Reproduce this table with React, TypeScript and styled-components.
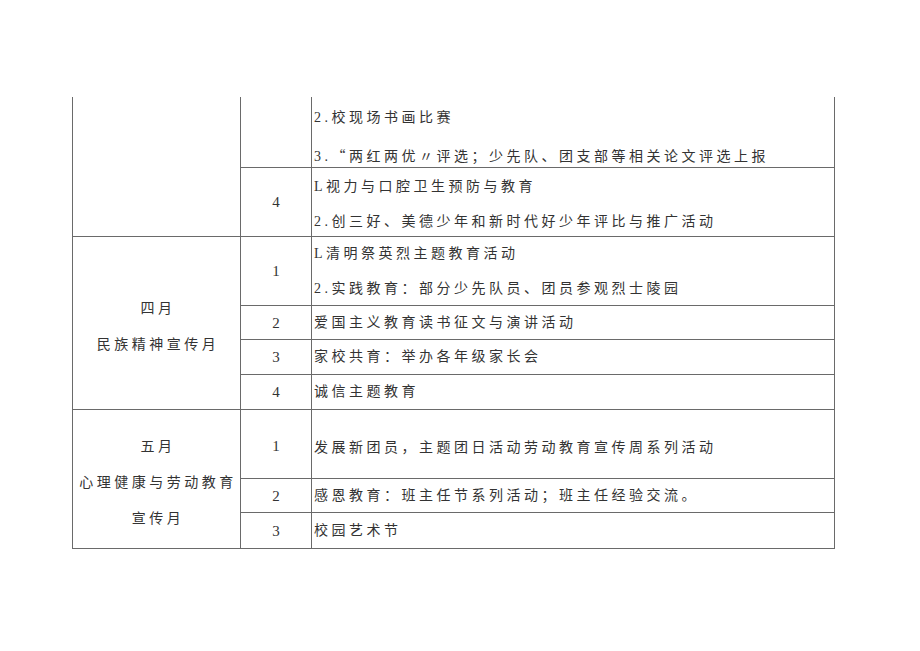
import styled, { createGlobalStyle } from "styled-components";

type Row = {
  height: number;
  month?: { lines: string[]; span: number };
  monthBlank?: number;
  num?: string;
  items: string[];
  gap?: number;
  padTop?: number;
  top?: boolean;
  noTop?: boolean;
};

const rows: Row[] = [
  {
    height: 70,
    monthBlank: 2,
    num: "",
    items: ["2.校现场书画比赛", "3.“两红两优〃评选；少先队、团支部等相关论文评选上报"],
    gap: 17,
    padTop: 11,
    top: true,
    noTop: true,
  },
  {
    height: 69,
    num: "4",
    padTop: 4,
    items: ["L视力与口腔卫生预防与教育", "2.创三好、美德少年和新时代好少年评比与推广活动"],
  },
  {
    height: 69,
    month: { lines: ["四月", "民族精神宣传月"], span: 4 },
    num: "1",
    items: ["L清明祭英烈主题教育活动", "2.实践教育：部分少先队员、团员参观烈士陵园"],
  },
  { height: 34, num: "2", items: ["爱国主义教育读书征文与演讲活动"] },
  { height: 35, num: "3", items: ["家校共育：举办各年级家长会"] },
  { height: 35, num: "4", items: ["诚信主题教育"] },
  {
    height: 69,
    month: { lines: ["五月", "心理健康与劳动教育", "宣传月"], span: 3 },
    num: "1",
    padTop: 8,
    items: ["发展新团员，主题团日活动劳动教育宣传周系列活动"],
  },
  { height: 34, num: "2", items: ["感恩教育：班主任节系列活动；班主任经验交流。"] },
  { height: 36, num: "3", items: ["校园艺术节"] },
];

const Global = createGlobalStyle`
  html, body {
    margin: 0;
    padding: 0;
    background: #fff;
  }
  body {
    font-family: "Liberation Serif", "Noto Sans CJK SC", serif;
    color: #333;
  }
`;

const Page = styled.div`
  width: 920px;
  height: 651px;
  padding: 97px 0 0 72px;
  box-sizing: border-box;
`;

const Table = styled.table`
  border-collapse: collapse;
  table-layout: fixed;
  width: 762px;
`;

const Cell = styled.td<{ $noTop?: boolean; $align?: string; $valign?: string }>`
  border: 1px solid #6a6a6a;
  border-top: ${(p) => (p.$noTop ? "none" : "1px solid #6a6a6a")};
  padding: 0;
  text-align: ${(p) => p.$align || "left"};
  vertical-align: ${(p) => p.$valign || "middle"};
  font-size: 14px;
  letter-spacing: 3.5px;
  line-height: 20px;
`;

const MonthList = styled.div`
  display: flex;
  flex-direction: column;
  align-items: center;
  gap: 16px;
  padding: 7px 0 0 3px;
`;

const Num = styled.span<{ $pt: number }>`
  display: block;
  padding-top: ${(p) => p.$pt}px;
  font-size: 15px;
  letter-spacing: 0;
`;

const Wide = styled.span`
  font-family: "Noto Sans CJK SC", sans-serif;
`;

const Items = styled.div<{ $gap: number; $pt: number }>`
  display: flex;
  flex-direction: column;
  gap: ${(p) => p.$gap}px;
  padding: ${(p) => p.$pt}px 0 0 2px;
  white-space: nowrap;
`;

const renderText = (t: string) =>
  t.split(/([“〃])/).map((part, i) =>
    part === "“" || part === "〃" ? <Wide key={i}>{part}</Wide> : part
  );

export default function App() {
  return (
    <Page>
      <Global />
      <Table>
        <colgroup>
          <col style={{ width: 168 }} />
          <col style={{ width: 71 }} />
          <col style={{ width: 523 }} />
        </colgroup>
        <tbody>
          {rows.map((r, i) => (
            <tr key={i} style={{ height: r.height }}>
              {r.monthBlank && <Cell rowSpan={r.monthBlank} $noTop={r.noTop} />}
              {r.month && (
                <Cell rowSpan={r.month.span} $align="center">
                  <MonthList>
                    {r.month.lines.map((l) => (
                      <div key={l}>{l}</div>
                    ))}
                  </MonthList>
                </Cell>
              )}
              <Cell $align="center" $noTop={r.noTop}>
                <Num $pt={r.top ? 0 : Math.max(0, (r.padTop || 0) - 4)}>{r.num}</Num>
              </Cell>
              <Cell $noTop={r.noTop} $valign={r.top ? "top" : "middle"}>
                <Items $gap={r.gap ?? 15} $pt={r.padTop || 0}>
                  {r.items.map((t) => (
                    <div key={t}>{renderText(t)}</div>
                  ))}
                </Items>
              </Cell>
            </tr>
          ))}
        </tbody>
      </Table>
    </Page>
  );
}
